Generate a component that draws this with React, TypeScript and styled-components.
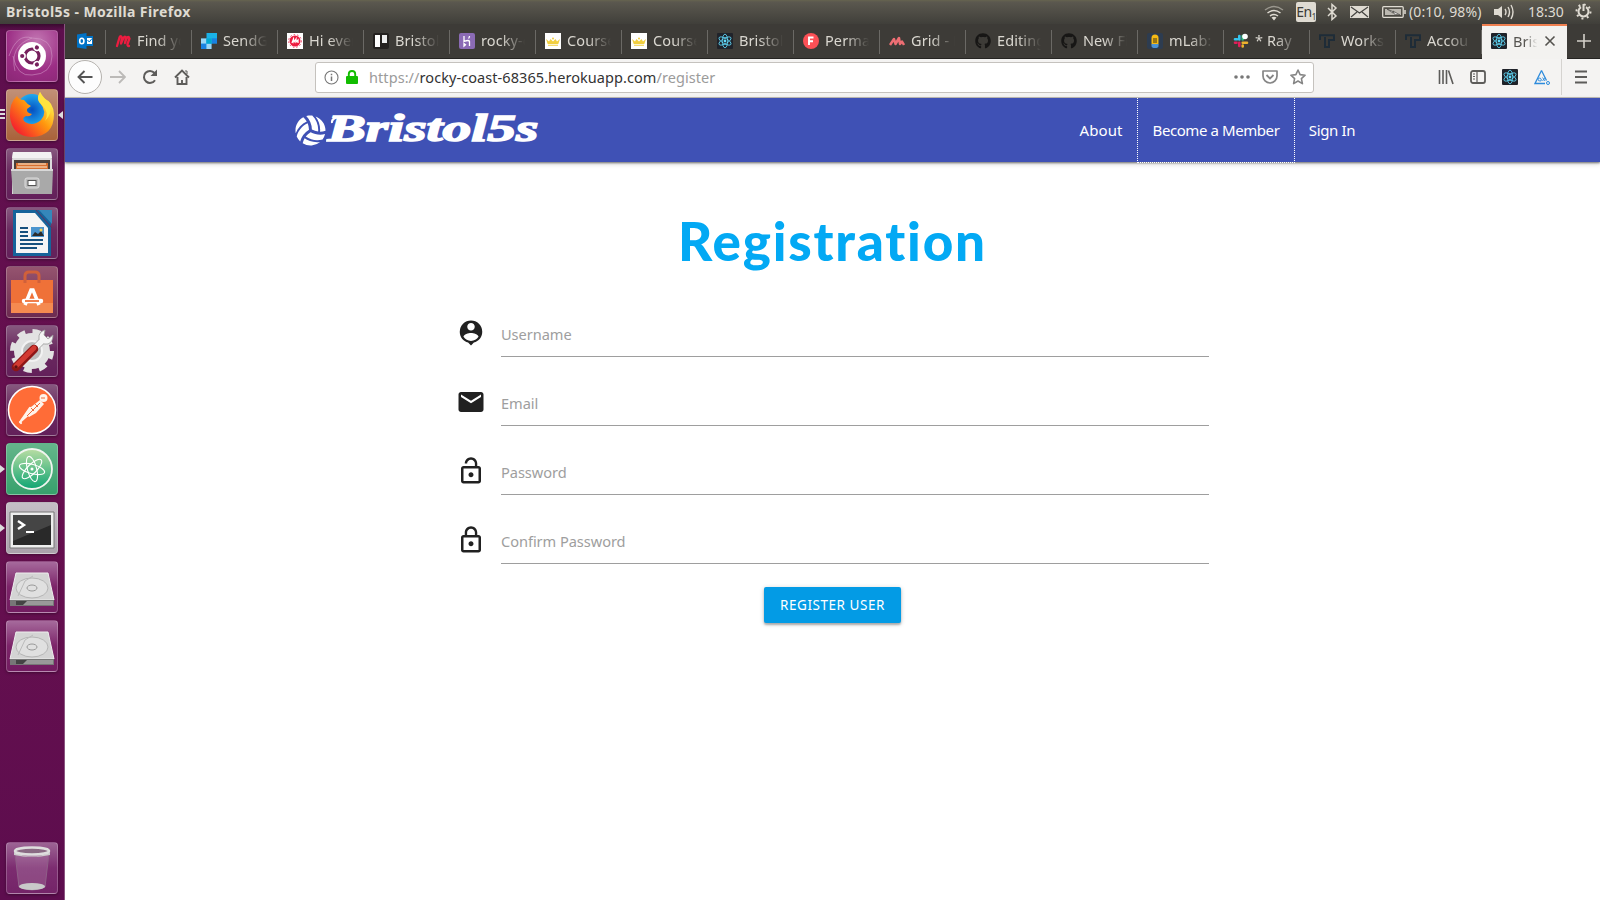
import React from 'react';
import styled, { createGlobalStyle } from 'styled-components';
import { MdPersonPin, MdEmail, MdLockOpen, MdLockOutline } from 'react-icons/md';
import { FaVolleyballBall, FaGithub } from 'react-icons/fa';

const GlobalStyle = createGlobalStyle`
  * { box-sizing: border-box; }
  body { margin: 0; background: #fff; overflow: hidden; }
  svg { display: block; flex: none; }
`;

const Desktop = styled.div`
  width: 1600px;
  height: 900px;
  display: flex;
  flex-direction: column;
  font-family: 'Noto Sans', 'Open Sans', sans-serif;
  font-size: 14.5px;
`;

/* ---------- system bar ---------- */
const SystemBar = styled.header`
  height: 24px;
  flex: none;
  display: flex;
  align-items: center;
  padding: 0 8px 1px 6px;
  color: #dfdbd2;
  background: linear-gradient(#66644f 0, #5b584f 2px, #403f3a 100%);
`;
const WindowTitle = styled.span`
  flex: 1;
  font-weight: 700;
  font-size: 14px;
  letter-spacing: 0.4px;
`;
const Indicator = styled.span<{ $w: number; $gap?: number; $ls?: number }>`
  width: ${(p) => p.$w}px;
  margin-left: ${(p) => p.$gap ?? 0}px;
  letter-spacing: ${(p) => p.$ls ?? 0}px;
  font-size: 14px;
  white-space: nowrap;
  display: flex;
  align-items: center;
`;
const Keyboard = styled(Indicator)`
  height: 20px;
  justify-content: center;
  background: #dfdbd2;
  color: #3c3b37;
  border-radius: 2px;
  sub { font-size: 8px; align-self: flex-end; }
`;

/* ---------- launcher ---------- */
const Body = styled.div`
  flex: 1;
  display: flex;
  min-height: 0;
`;
const Launcher = styled.nav`
  width: 65px;
  flex: none;
  display: flex;
  flex-direction: column;
  gap: 7px;
  padding: 6px 0 6px 6px;
  border-right: 1px solid #8a5580;
  background: linear-gradient(#3a0a30 0, #5d0f4d 6px, #68104f 50%, #5d0d4e 100%);
`;
const Tile = styled.div<{ $bg?: string; $last?: boolean }>`
  position: relative;
  width: 52px;
  height: 52px;
  flex: none;
  border-radius: 4px;
  border: 1px solid rgba(255, 255, 255, 0.22);
  background: ${(p) => p.$bg ?? 'linear-gradient(#86587e, #6b2a60 45%, #63205a)'};
  box-shadow: 0 1px 3px rgba(0, 0, 0, 0.35);
  margin-top: ${(p) => (p.$last ? 'auto' : 0)};
  display: flex;
  align-items: center;
  justify-content: center;
`;
const Marker = styled.i<{ $right?: boolean }>`
  position: absolute;
  top: 21px;
  ${(p) => (p.$right ? 'right: -6px' : 'left: -7px')};
  border: solid transparent;
  border-width: 4px 0;
  ${(p) => (p.$right ? 'border-right: 5px solid #ddd' : 'border-left: 5px solid #ddd')};
`;
const Stack = styled.i`
  position: absolute;
  left: -7px;
  top: 19px;
  width: 5px;
  height: 11px;
  background: repeating-linear-gradient(#ddd 0 2px, transparent 2px 4px);
`;

/* ---------- browser ---------- */
const Browser = styled.div`
  flex: 1;
  display: flex;
  flex-direction: column;
  min-width: 0;
`;
const TabStrip = styled.div`
  height: 35px;
  flex: none;
  display: flex;
  background: #3d3b37;
  border-bottom: 1px solid #252422;
`;
const Tab = styled.div<{ $pinned?: boolean; $active?: boolean }>`
  position: relative;
  width: ${(p) => (p.$pinned ? 41 : p.$active ? 85 : 86)}px;
  height: ${(p) => (p.$active ? 35 : 34)}px;
  padding-left: ${(p) => (p.$pinned ? 12 : 9)}px;
  padding-bottom: 1px;
  display: flex;
  align-items: center;
  gap: 6px;
  flex: none;
  color: ${(p) => (p.$active ? '#55534f' : '#dad7d0')};
  background: ${(p) => (p.$active ? 'linear-gradient(#f08050 0 2px, #f3f2f0 2px)' : 'none')};
  &::after {
    content: '';
    position: absolute;
    right: 0;
    top: 6px;
    height: 24px;
    border-right: ${(p) => (p.$active ? '0' : '1px solid #6b6965')};
  }
`;
const TabText = styled.span<{ $w?: number }>`
  width: ${(p) => p.$w ?? 45}px;
  margin-bottom: 1px;
  overflow: hidden;
  white-space: nowrap;
  line-height: 20px;
  letter-spacing: 0.1px;
  mask-image: linear-gradient(to right, #000 45%, transparent 98%);
`;
const NewTab = styled.div`
  flex: 1;
  display: flex;
  align-items: center;
  justify-content: center;
`;
const Toolbar = styled.div`
  height: 39px;
  flex: none;
  display: flex;
  align-items: center;
  padding: 0 11px 2px 3px;
  background: #f4f3f2;
  border-bottom: 1px solid #c4c1bd;
`;
const BackButton = styled.div`
  width: 34px;
  height: 34px;
  border-radius: 50%;
  border: 1px solid #b5b2ae;
  background: #fdfdfd;
  display: grid;
  place-items: center;
`;
const Tool = styled.div<{ $ml?: number }>`
  width: 16px;
  margin-left: ${(p) => p.$ml ?? 16}px;
`;
const AddressBar = styled.div`
  width: 999px;
  height: 31px;
  margin-left: 125px;
  border: 1px solid #c5c2be;
  border-radius: 3px;
  background: #fff;
  display: flex;
  align-items: center;
  padding: 0 7px 0 8px;
  gap: 6px;
`;
const Url = styled.span`
  flex: 1;
  margin-left: 4px;
  color: #9b9b9b;
  letter-spacing: 0.07px;
  b { font-weight: 400; color: #333; }
`;
const Divider = styled.i`
  width: 1px;
  height: 36px;
  margin-left: 11px;
  background: #d5d3d0;
`;

/* ---------- page ---------- */
const Page = styled.main`
  flex: 1;
  background: #fff;
`;
const NavBar = styled.div`
  height: 64px;
  display: flex;
  justify-content: space-between;
  padding: 0 231px 0 230px;
  color: #fff;
  background: #3f51b5;
  box-shadow: 0 1px 2px rgba(0, 0, 0, 0.5), 0 2px 5px rgba(0, 0, 0, 0.16);
`;
const Brand = styled.a`
  display: flex;
  align-items: center;
`;
const Links = styled.div`
  display: flex;
`;
const NavLink = styled.a<{ $w: number; $focused?: boolean; $ls?: number }>`
  width: ${(p) => p.$w}px;
  height: 65px;
  line-height: 64px;
  text-align: center;
  font-size: 15px;
  letter-spacing: ${(p) => p.$ls ?? 0}px;
  white-space: nowrap;
  border: ${(p) => (p.$focused ? '1px dotted #fff' : '0')};
  border-top: 0;
`;
const Form = styled.form`
  width: 753px;
  margin: 0 auto;
  padding-top: 41px;
  display: flex;
  flex-direction: column;
`;
const Heading = styled.h1`
  margin: 0 0 35px;
  height: 76px;
  line-height: 76px;
  text-align: center;
  color: #03a9f4;
  font-family: Lato, sans-serif;
  font-weight: 900;
  font-size: 53px;
  letter-spacing: 1.8px;
  white-space: nowrap;
`;
const Field = styled.label`
  height: 69px;
  display: flex;
  gap: 15px;
  color: #212121;
  & > svg { margin-top: 4px; }
`;
const FieldLine = styled.span`
  width: 708px;
  height: 43px;
  line-height: 41px;
  font-size: 14.6px;
  letter-spacing: -0.05px;
  color: #9e9e9e;
  border-bottom: 1px solid #9e9e9e;
`;
const Submit = styled.button`
  align-self: center;
  width: 137px;
  height: 36px;
  margin-top: -3px;
  padding: 0;
  border: 0;
  border-radius: 2px;
  color: #fff;
  background: #039be5;
  font: 13.5px 'Noto Sans', sans-serif;
  letter-spacing: 0.55px;
  white-space: nowrap;
  box-shadow: 0 2px 2px rgba(0, 0, 0, 0.24), 0 1px 5px rgba(0, 0, 0, 0.2);
`;

/* ---------- drawings ---------- */
const Svg = ({ s = 16, vb = 16, children }: { s?: number; vb?: number; children: React.ReactNode }) => (
  <svg width={s} height={s} viewBox={`0 0 ${vb} ${vb}`} fill="none">{children}</svg>
);
const ReactMark = () => (
  <Svg>
    <rect width="16" height="16" rx="1" fill="#20232a" />
    <g stroke="#61dafb" strokeWidth=".8">
      {[30, 90, 150].map((a) => <ellipse key={a} cx="8" cy="8" rx="6.8" ry="2.7" transform={`rotate(${a} 8 8)`} />)}
    </g>
    <circle cx="8" cy="8" r="1.4" fill="#61dafb" />
  </Svg>
);
const Outlook = () => (
  <Svg>
    <path d="M9 3h7v10H9z" fill="#0072c6" /><path d="M0 1.5 9.5 0v16L0 14.5z" fill="#0072c6" />
    <ellipse cx="4.8" cy="8" rx="2.1" ry="2.8" stroke="#fff" strokeWidth="1.6" />
    <path d="M10 5h5v6h-5z" fill="#fff" /><path d="m10.5 7 1.8 2L15 5.5" stroke="#0072c6" />
  </Svg>
);
const MeetupM = () => <Svg><path d="M2 13 4.500 4.500Q5.500 2 7 4.500L6 10.500l2.500-5.500q1.500-2.500 2.500 0l-1 5 1.500-4.500q2-3 3 0l-2 5.500q-.2 2.200 1.500 2" stroke="#ed1c40" strokeWidth="2.300" strokeLinecap="round" strokeLinejoin="round" /></Svg>;
const SendGrid = () => (
  <Svg>
    <path d="M5.300 0H16v10.700H5.300z" fill="#1ab2e8" /><path d="M0 5.300h10.700V16H0z" fill="#3aaef0" />
    <path d="M0 5.300h5.300v5.400H0z" fill="#9dd6f5" /><path d="M5.300 10.700h5.400V16H5.300z" fill="#9dd6f5" />
    <path d="M10.700 5.300H16v5.400h-5.300z" fill="#1a82e2" /><path d="M0 10.700h5.300V16H0z" fill="#1a82e2" /><path d="M5.300 5.300h5.400v5.400H5.300z" fill="#00a9d1" />
    <path d="M0 0h5.300v5.300H0zM10.700 10.700H16V16h-5.300z" fill="#3d3b37" />
  </Svg>
);
const MeetupRound = () => (
  <Svg>
    <path d="M0 0h16v16H0z" fill="#fff" /><circle cx="8" cy="8" r="5.500" fill="#ed1c40" /><circle cx="8" cy="8" r="6.400" stroke="#ed3c60" strokeDasharray="1.500 2" />
    <path d="m5 10 1.500-4 .5 3L9 6v3l2-2v3" stroke="#fff" strokeWidth="1.300" />
  </Svg>
);
const Trello = () => <Svg><rect width="16" height="16" rx="2" fill="#24211f" /><rect x="2" y="2" width="5" height="12" fill="#fff" /><rect x="9" y="2" width="5" height="8" fill="#eee" /></Svg>;
const Heroku = () => <Svg><rect width="16" height="16" rx="2" fill="#8b6bb5" /><path d="M5 3v5.500q5-2 5.500 0V13M10.500 3q0 1.500-1 2.500M5 10.500V13l1.500-1.300z" stroke="#fff" strokeWidth="1.300" /></Svg>;
const Crown = () => <Svg><path d="M0 0h16v16H0z" fill="#fff" /><path d="m1 6 3 2.500L5.500 6 8 8.500 10.500 6 12 8.500 15 6l-1.700 5H2.700zM3 11.800h10v1H3z" fill="#f2cf3f" /><circle cx="8" cy="5.500" r="1" fill="#f2cf3f" /></Svg>;
const Perma = () => <Svg><circle cx="8" cy="8" r="8" fill="#fc5056" /><path d="M6 12V4.500h4.500M6 8.300h4" stroke="#fff" strokeWidth="1.900" /></Svg>;
const Materialize = () => <Svg><path d="m1 12 4-6 1.500 5 3.500-6 1 6 2-2.500 2 3.500" stroke="#ee6e73" strokeWidth="2.500" strokeLinejoin="round" /></Svg>;
const MLab = () => <Svg><rect width="16" height="16" rx="2" fill="#2d3c50" /><rect x="4.500" y="1.500" width="7" height="12" rx="3.500" fill="#f5b914" /><path d="M4.500 11h7v2q0 2-3.500 2t-3.500-2z" fill="#4c93d5" /><path d="M7 5v5m2-5v5" stroke="#3d3215" /></Svg>;
const Slack = () => (
  <Svg>
    <g strokeWidth="2.600" strokeLinecap="round">
      <path d="M6.300 3v3.500M2 6.300h2" stroke="#36c5f0" /><path d="M9.700 3v3.500" stroke="#2eb67d" /><path d="M9.700 9.700H14M9.700 12.500v1" stroke="#ecb22e" /><path d="M6.300 9.700V13M2 9.700h1.500" stroke="#e01e5a" />
    </g>
    <circle cx="12" cy="3.500" r="2.800" fill="#fff" />
  </Svg>
);
const TMark = () => <Svg><path d="M1 7V2.200h14V7h-4M6 4v10h4V6" stroke="#1e2c38" strokeWidth="1.900" /></Svg>;

const tabs: [React.ReactNode, string][] = [
  [<MeetupM />, 'Find yo'], [<SendGrid />, 'SendGr'], [<MeetupRound />, 'Hi ever'], [<Trello />, 'Bristol'],
  [<Heroku />, 'rocky-c'], [<Crown />, 'Course'], [<Crown />, 'Course'], [<ReactMark />, 'Bristol'],
  [<Perma />, 'Permal'], [<Materialize />, 'Grid - M'], [<FaGithub size={16} color="#171615" />, 'Editing'],
  [<FaGithub size={16} color="#171615" />, 'New Fi'], [<MLab />, 'mLab: '], [<Slack />, '* Ray |'],
  [<TMark />, 'Works'], [<TMark />, 'Accou'],
];

const UbuntuIcon = () => (
  <Svg s={50} vb={50}>
    <g stroke="#d9a3cf" opacity=".5"><path d="M8 40Q2 15 25 7q20 0 20 18M25 7Q10 2 2 25M45 25q0 18-20 19M25 44Q10 46 6 25" /></g>
    <circle cx="25" cy="25" r="14" fill="#fff" /><circle cx="25" cy="25" r="7" stroke="#76205d" strokeWidth="3.200" />
    {[60, 180, 300].map((a) => <g key={a} transform={`rotate(${a} 25 25)`}><circle cx="34.500" cy="25" r="3.400" fill="#fff" /><circle cx="34.800" cy="25" r="2.100" fill="#76205d" /></g>)}
  </Svg>
);
const FirefoxIcon = () => (
  <Svg s={50} vb={50}>
    <defs>
      <linearGradient id="fx" x1=".85" y1=".1" x2=".1" y2=".8"><stop stopColor="#fff44f" /><stop offset=".45" stopColor="#ff980e" /><stop offset="1" stopColor="#f5252c" /></linearGradient>
      <radialGradient id="fb"><stop stopColor="#054fc1" /><stop offset="1" stopColor="#20a9ee" /></radialGradient>
    </defs>
    <circle cx="25" cy="20" r="16" fill="url(#fb)" />
    <path d="M33 2q-4 7 0 11 8 9 1 17-8 7-16 2-4-4 1-6 4 1 6-2-6-1-5-5l4-3q-4-2-7-6-5 0-7-4Q2 13 3 27q2 19 22 20 22-1 22-23Q46 12 38 9q-4-3-5-7" fill="url(#fx)" />
    <path d="M33 2q-5 8 2 13 8 8 3 16 8-8 5-18-6-4-10-11" fill="#ffe43d" />
  </Svg>
);
const FilesIcon = () => (
  <Svg s={50} vb={50}>
    <path d="M6 3h38l1 8v34H5V11z" fill="#ddd" /><path d="M6 3h38l1 6H5z" fill="#f2f2f2" /><path d="M7 11h36v12H7z" fill="#4a403c" />
    <path d="M9 14h32v8H9z" fill="#d87030" /><path d="M11 15h28M10 18h30" stroke="#fff0d5" /><path d="M4 20h42l-1 25H6z" fill="#a9a9a9" /><path d="M4 20h42v2H4z" fill="#d8d8d8" />
    <rect x="18" y="29" width="14" height="10" rx="2" fill="#bbb" stroke="#ddd" /><rect x="21" y="31.500" width="8" height="5" fill="#fff" stroke="#555" />
  </Svg>
);
const WriterIcon = () => (
  <Svg s={50} vb={50}>
    <path d="M6 2h38v46H6z" fill="#16639a" /><path d="M9 5h19l13 15v25H9z" fill="#f5f5f5" /><path d="M32 2h13v14z" fill="#3587ba" /><path d="m29 2 16 18" stroke="#65305d" />
    <path d="M13 20h8m-8 4h8m-8 4h8m-8 4h23m-23 4h23m-23 4h17" stroke="#16507d" strokeWidth="2" /><path d="M24 19h13v10H24z" fill="#4a94ce" /><path d="m25 28 3-4 3 2 3-3 3 5z" fill="#2c2c2c" /><circle cx="34" cy="22" r="1.500" fill="#f5cf50" />
  </Svg>
);
const SoftwareIcon = () => (
  <Svg s={50} vb={50}>
    <path d="M4 13h42v33H4z" fill="#ef7138" /><path d="M4 36h42v10H4z" fill="#f58a50" /><path d="M18 16V9q0-4 4-4h6q4 0 4 4v7" stroke="#d0603a" strokeWidth="3" />
    <path d="m18 38 6-15h2l6 15" stroke="#fff" strokeWidth="3.500" /><path d="M17 34h17" stroke="#fff" strokeWidth="4.500" strokeLinecap="round" /><path d="M18 34h14" stroke="#ef7138" strokeWidth="1.800" />
  </Svg>
);
const SettingsIcon = () => (
  <Svg s={50} vb={50}>
    <circle cx="25" cy="25" r="18" fill="#e2e2e2" /><circle cx="25" cy="25" r="19.500" stroke="#e2e2e2" strokeWidth="5" strokeDasharray="8 7.300" /><circle cx="25" cy="25" r="10" fill="#bcbcbc" stroke="#f2f2f2" strokeWidth="2" />
    <path d="m24 26 14-14" stroke="#aaa" strokeWidth="7" /><path d="M38 4q-7 2-6 9 2 6 9 5 5-2 5-9l-5 4-4-4z" fill="#f4f4f4" stroke="#999" strokeWidth=".8" /><path d="m24 26 13-13" stroke="#f4f4f4" strokeWidth="5.500" />
    <path d="M9 41 27 23" stroke="#8e1616" strokeWidth="8.500" strokeLinecap="round" /><path d="M9 40 27 22" stroke="#d23a32" strokeWidth="5" strokeLinecap="round" /><circle cx="9" cy="41" r="1.700" fill="#601010" />
  </Svg>
);
const PostmanIcon = () => (
  <Svg s={50} vb={50}>
    <circle cx="25" cy="25" r="23.500" fill="#ff6c37" stroke="#fff" strokeWidth="1.500" /><path d="m19 29 5-7 9-7 4 4-8 9-7 4z" fill="#fff3ea" /><circle cx="36.500" cy="13" r="4" fill="#fff3ea" />
    <path d="m22 29-9 8m1-1 9-13m-10 14 1 1" stroke="#fff3ea" strokeWidth="2.200" strokeLinecap="round" /><path d="m20 31 13-13m-9 5 3 3m1-7 3 3M34 13h4" stroke="#ef6a3a" />
  </Svg>
);
const AtomIcon = () => (
  <Svg s={50} vb={50}>
    <defs><linearGradient id="at" x2="0" y2="1"><stop stopColor="#b9dda3" /><stop offset="1" stopColor="#0fa573" /></linearGradient></defs>
    <circle cx="25" cy="25" r="20" fill="url(#at)" stroke="#f0f5ef" strokeWidth="1.800" />
    <g stroke="#fff" strokeWidth="1.100">{[15, 75, 135].map((a) => <ellipse key={a} cx="25" cy="25" rx="13" ry="4.600" transform={`rotate(${a} 25 25)`} />)}</g><circle cx="25" cy="25" r="1.500" fill="#fff" />
  </Svg>
);
const TerminalIcon = () => (
  <Svg s={50} vb={50}>
    <path d="M3 9h44v36H3z" fill="#eee" stroke="#777" /><path d="M6 12h38v30H6z" fill="#292929" /><path d="M6 12h38v10L6 38z" fill="#555" opacity=".65" />
    <path d="m11 18 6 4-6 4" stroke="#fff" strokeWidth="2.400" /><path d="M19 29h8" stroke="#fff" strokeWidth="2" />
  </Svg>
);
const DiskIcon = () => (
  <Svg s={50} vb={50}>
    <path d="M9 11h32l6 27H3z" fill="#d4d4d4" stroke="#eee" /><path d="M3 38h44v6H3z" fill="#777" /><path d="M9 39h34v4H9z" fill="#444" /><path d="M20 39h26v4H16z" fill="#999" />
    <ellipse cx="25" cy="26" rx="16" ry="10" fill="#e0e0e0" stroke="#b5b5b5" /><ellipse cx="25" cy="26" rx="5" ry="3" stroke="#999" /><path d="m11 34 7-15 8-5" stroke="#bbb" />
  </Svg>
);
const TrashIcon = () => (
  <Svg s={50} vb={50}>
    <path d="m8 10 4 34q13 6 26 0l4-34" fill="#fff" fillOpacity=".15" stroke="#8f5f88" /><ellipse cx="25" cy="43.500" rx="13" ry="3.500" fill="#c9c9c9" />
    <path d="M7 9q18 9 36 0v3q-18 4-36 0z" fill="#ccc" /><ellipse cx="25" cy="8" rx="17" ry="3.500" fill="#8a6a84" stroke="#dedede" strokeWidth="2.500" />
  </Svg>
);

const launcher: { icon: React.ReactNode; bg?: string; mark?: 'focus' | 'open'; last?: boolean }[] = [
  { icon: <UbuntuIcon />, bg: 'radial-gradient(circle at 60% 20%, #c276b2, #9c2e85 60%, #8a2775)' },
  { icon: <FirefoxIcon />, bg: 'linear-gradient(#c19077, #a9623a)', mark: 'focus' },
  { icon: <FilesIcon /> }, { icon: <WriterIcon /> }, { icon: <SoftwareIcon />, bg: 'linear-gradient(#95546f, #6c2a50)' },
  { icon: <SettingsIcon /> }, { icon: <PostmanIcon /> },
  { icon: <AtomIcon />, bg: 'linear-gradient(#65b58b, #37a16c)', mark: 'open' },
  { icon: <TerminalIcon />, bg: 'linear-gradient(#c5bfc6, #aaa2ab)', mark: 'open' },
  { icon: <DiskIcon />, bg: 'linear-gradient(#a66a9c, #7c2469 50%, #721c60)' },
  { icon: <DiskIcon />, bg: 'linear-gradient(#a66a9c, #7c2469 50%, #721c60)' },
  { icon: <TrashIcon />, bg: 'linear-gradient(#9c6494, #7c2c70 50%, #742468)', last: true },
];

const fields = [
  { icon: MdPersonPin, label: 'Username' },
  { icon: MdEmail, label: 'Email' },
  { icon: MdLockOpen, label: 'Password' },
  { icon: MdLockOutline, label: 'Confirm Password' },
];

export default function App() {
  return (
    <Desktop>
      <GlobalStyle />
      <SystemBar>
        <WindowTitle>Bristol5s - Mozilla Firefox</WindowTitle>
        <Indicator $w={20}>
          <Svg s={20} vb={20}><g stroke="#dfdbd2" strokeWidth="1.500"><path d="M1 8q9-7 18 0" opacity=".5" /><path d="M3.500 11q6.500-5 13 0M6 14q4-3 8 0" /></g><path d="m7.500 15.500 2.500 3 2.500-3q-2.500-1.500-5 0" fill="#dfdbd2" /></Svg>
        </Indicator>
        <Keyboard $w={20} $gap={12} $ls={-0.5}>En<sub>1</sub></Keyboard>
        <Indicator $w={12} $gap={10}><svg width="12" height="18" viewBox="0 0 12 18" fill="none"><path d="m2 5 8 8-4 3.500V1.500L10 5l-8 8" stroke="#dfdbd2" strokeWidth="1.500" /></svg></Indicator>
        <Indicator $w={19} $gap={12}><svg width="19" height="14"><path d="M0 1h19v12H0z" fill="#dfdbd2" /><path d="m1 2 8.500 6L18 2M1 12l6-5m11 5-6-5" stroke="#454440" fill="none" strokeWidth="1.200" /></svg></Indicator>
        <Indicator $w={24} $gap={13}><svg width="24" height="14"><rect x=".7" y="1.700" width="20.500" height="10.600" rx="1" fill="none" stroke="#dfdbd2" strokeWidth="1.300" /><path d="M3 4h16v6H3zM22 5h2v4h-2z" fill="#bbb8b0" /><path d="m5 4 6 4V6l7 4-6-1v-2z" fill="#fff" stroke="#45443f" strokeWidth=".7" /></svg></Indicator>
        <Indicator $w={74} $gap={3} $ls={0.12}>(0:10, 98%)</Indicator>
        <Indicator $w={21} $gap={11}><svg width="21" height="16" fill="none"><path d="M0 5h4l4-3v12l-4-3H0z" fill="#dfdbd2" /><path d="M11 5q2 3 0 6m3-8q3 5 0 10m3-12q4 7 0 14" stroke="#dfdbd2" strokeWidth="1.400" /></svg></Indicator>
        <Indicator $w={36} $gap={13}>18:30</Indicator>
        <Indicator $w={17} $gap={11}>
          <Svg s={17} vb={17}><path d="M6 4.200a5 5 0 1 0 5 0M8.500 1v7" stroke="#dfdbd2" strokeWidth="2" /><circle cx="8.500" cy="8.500" r="7" stroke="#dfdbd2" strokeWidth="2" strokeDasharray="2 3.500" /></Svg>
        </Indicator>
      </SystemBar>
      <Body>
        <Launcher>
          {launcher.map((t, i) => (
            <Tile key={i} $bg={t.bg} $last={t.last}>
              {t.icon}
              {t.mark === 'open' && <Marker />}
              {t.mark === 'focus' && <><Stack /><Marker $right /></>}
            </Tile>
          ))}
        </Launcher>
        <Browser>
          <TabStrip>
            <Tab $pinned><Outlook /></Tab>
            {tabs.map(([icon, text], i) => <Tab key={i}>{icon}<TabText>{text}</TabText></Tab>)}
            <Tab $active>
              <ReactMark /><TabText $w={25}>Bristol</TabText>
              <Svg s={12} vb={12}><path d="m1.500 1.500 9 9m0-9-9 9" stroke="#55534f" strokeWidth="1.600" /></Svg>
            </Tab>
            <NewTab><Svg s={14} vb={14}><path d="M7 0v14M0 7h14" stroke="#d4d1ca" strokeWidth="1.600" /></Svg></NewTab>
          </TabStrip>
          <Toolbar>
            <BackButton><Svg><path d="M15.500 8H1.500m6-6-6 6 6 6" stroke="#555" strokeWidth="1.900" /></Svg></BackButton>
            <Tool $ml={8}><Svg><path d="M0 8h15M9 2l6 6-6 6" stroke="#bcbab8" strokeWidth="1.800" /></Svg></Tool>
            <Tool><Svg><path d="M13 11.200A6 6 0 1 1 12.500 4" stroke="#5d5c5a" strokeWidth="2" /><path d="M15 .5V7H8.500z" fill="#5d5c5a" /></Svg></Tool>
            <Tool><Svg><path d="m1 8.500 7-7 7 7M3.500 8v7h9V8M8 11v4" stroke="#5d5c5a" strokeWidth="1.900" /><path d="M11 2h2v3" stroke="#5d5c5a" /></Svg></Tool>
            <AddressBar>
              <Svg s={15} vb={15}><circle cx="7.500" cy="7.500" r="6.500" stroke="#777" strokeWidth="1.100" /><path d="M7.500 6.500V11M7.500 3.700v1.600" stroke="#777" strokeWidth="1.500" /></Svg>
              <Svg s={14} vb={14}><rect x="1" y="6" width="12" height="8" rx="1" fill="#12bc00" /><path d="M3.800 7V4q0-3 3.200-3t3.200 3v3" stroke="#12bc00" strokeWidth="1.900" /></Svg>
              <Url>https://<b>rocky-coast-68365.herokuapp.com</b>/register</Url>
              <Svg><g fill="#777"><circle cx="2" cy="8" r="1.800" /><circle cx="8" cy="8" r="1.800" /><circle cx="14" cy="8" r="1.800" /></g></Svg>
              <Tool $ml={6}><Svg><path d="M1 2h14v5a7 7 0 0 1-14 0z" stroke="#858585" strokeWidth="1.700" strokeLinejoin="round" /><path d="m4.500 6 3.500 3.500L11.500 6" stroke="#858585" strokeWidth="1.800" /></Svg></Tool>
              <Tool $ml={6}><Svg><path d="m8 1 2.100 4.600 5 .6-3.700 3.400 1 5L8 12l-4.400 2.600 1-5L.9 6.200l5-.6z" stroke="#858585" strokeWidth="1.600" strokeLinejoin="round" /></Svg></Tool>
            </AddressBar>
            <Tool $ml={124}><Svg><path d="M1.500 1v14M5 1v14M8.500 1v14m2-13.500L15 15" stroke="#5d5c5a" strokeWidth="1.600" /></Svg></Tool>
            <Tool><Svg><rect x="1" y="2" width="14" height="12" rx="2" stroke="#5d5c5a" strokeWidth="1.800" /><path d="M7 2v12M3 5h2M3 7.500h2M3 10h2" stroke="#5d5c5a" strokeWidth="1.200" /></Svg></Tool>
            <Tool><ReactMark /></Tool>
            <Tool><Svg><path d="M7.500 1.500 1 14.500h10M7.500 1.500l5 10" stroke="#2d8bdc" strokeWidth="1.300" /><circle cx="14" cy="14" r="1.500" stroke="#2d8bdc" /><path d="M4 11q0-2.500 2-2t1 3q-3 0-3-1m4.500-2.500 2.500 3.500m0-3.500L8.500 12" stroke="#2d8bdc" strokeWidth=".9" /></Svg></Tool>
            <Divider />
            <Tool $ml={11}><Svg><path d="M2 2.500h12M2 8h12M2 13.500h12" stroke="#5d5c5a" strokeWidth="1.800" /></Svg></Tool>
          </Toolbar>
          <Page>
            <NavBar>
              <Brand>
                <FaVolleyballBall size={31} />
                <svg width="216" height="64" viewBox="0 0 216 64">
                  <text x="1.500" y="43" textLength="211" lengthAdjust="spacingAndGlyphs" fontFamily="Liberation Serif, serif" fontStyle="italic" fontWeight="700" fontSize="38" fill="#fff" stroke="#fff" strokeWidth="1.500">Bristol5s</text>
                  <path d="M3 35Q2 29 14 29" transform="translate(3 -10)" stroke="#fff" strokeWidth="2" fill="none" />
                </svg>
              </Brand>
              <Links>
                <NavLink $w={72} $ls={0.1}>About</NavLink>
                <NavLink $w={158} $focused $ls={-0.42}>Become a Member</NavLink>
                <NavLink $w={74} $ls={-0.35}>Sign In</NavLink>
              </Links>
            </NavBar>
            <Form>
              <Heading>Registration</Heading>
              {fields.map(({ icon: Icon, label }) => (
                <Field key={label}><Icon size={30} /><FieldLine>{label}</FieldLine></Field>
              ))}
              <Submit type="button">REGISTER USER</Submit>
            </Form>
          </Page>
        </Browser>
      </Body>
    </Desktop>
  );
}
